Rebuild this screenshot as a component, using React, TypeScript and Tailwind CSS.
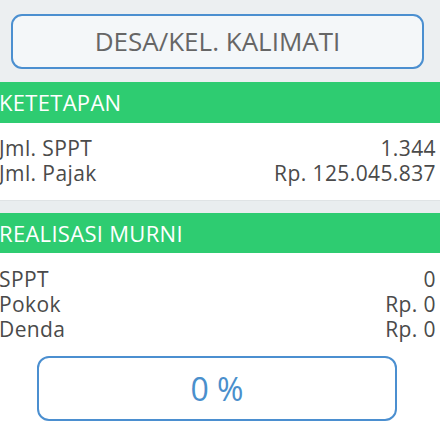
import React from "react";

function Row({ label, value }: { label: string; value: string }) {
  return (
    <div className="flex justify-between h-[25px]">
      <span className="block leading-[25px]">{label}</span>
      <span className="block leading-[25px]">{value}</span>
    </div>
  );
}

export default function App() {
  return (
    <div
      className="w-[440px] h-[440px] overflow-hidden bg-white"
      style={{ fontFamily: '"Open Sans", sans-serif' }}
    >
      <div className="bg-[#eceff1] pt-[14px] pb-[13px] pl-[11px] pr-[16px]">
        <div className="h-[55px] rounded-[11px] border-2 border-[#4b8fd0] bg-[#f4f7f9] flex items-center justify-center text-[26px] text-[#666666]">
          DESA/KEL. KALIMATI
        </div>
      </div>
      <div className="h-[41px] bg-[#2ecc71] flex items-center text-white text-[22px] font-medium tracking-[0.3px] -ml-px">
        KETETAPAN
      </div>
      <div className="pt-[13px] pb-[14px] pr-[4px] -ml-[1px] text-[21px] tracking-[0.4px] text-[#4a4a4a]">
        <Row label="Jml. SPPT" value="1.344" />
        <Row label="Jml. Pajak" value="Rp. 125.045.837" />
      </div>
      <div className="h-[13px] bg-[#e9edef] border-t border-[#dfe3e5]" />
      <div className="h-[40px] bg-[#2ecc71] flex items-center text-white text-[22px] font-medium tracking-[0.3px] -ml-px">
        REALISASI MURNI
      </div>
      <div className="pt-[14px] pr-[4px] -ml-px text-[21px] tracking-[0.4px] text-[#4a4a4a]">
        <Row label="SPPT" value="0" />
        <Row label="Pokok" value="Rp. 0" />
        <Row label="Denda" value="Rp. 0" />
      </div>
      <div className="mt-[14px] ml-[37px] w-[360px] h-[65px] rounded-[12px] border-2 border-[#4b8fd0] flex items-center justify-center text-[32px] text-[#4a8fcc]">
        0 %
      </div>
    </div>
  );
}
